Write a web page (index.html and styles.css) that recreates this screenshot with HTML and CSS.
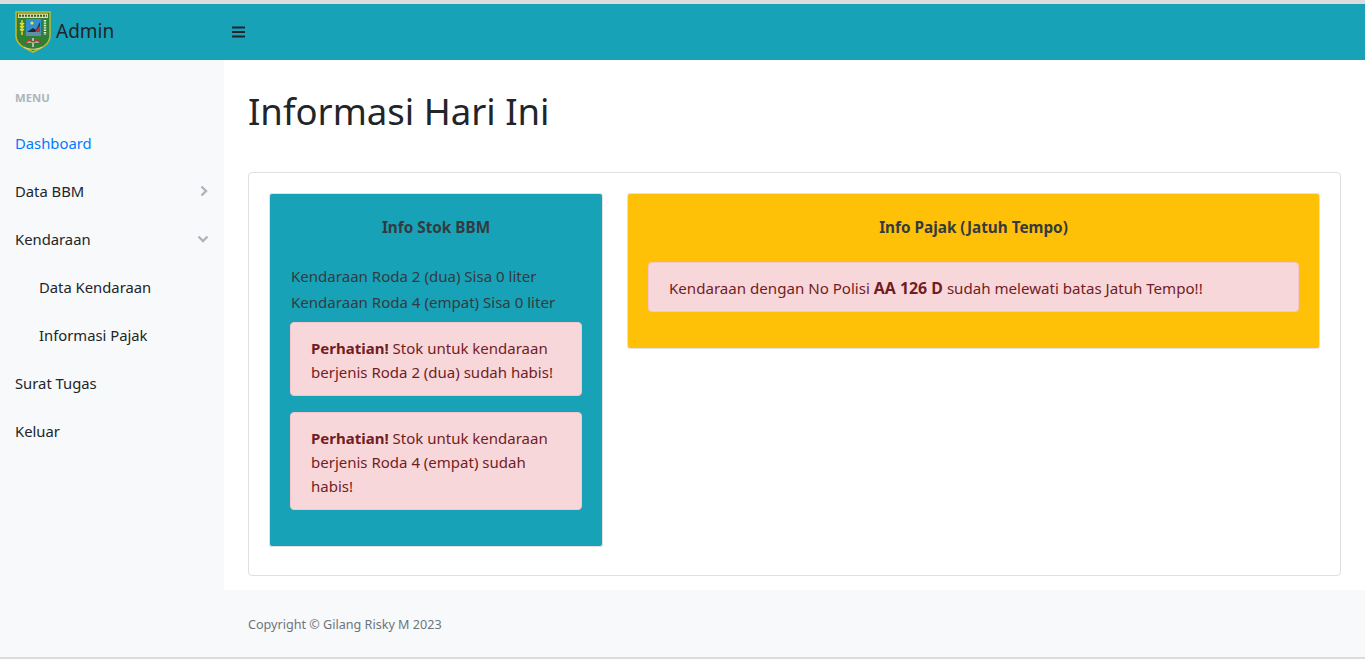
FILE: index.html
```html
<!DOCTYPE html>
<html lang="id">
<head>
    <meta charset="UTF-8">
    <meta name="viewport" content="width=device-width, initial-scale=1.0">
    <title>Informasi Hari Ini</title>
    <link rel="stylesheet" href="styles.css">
</head>
<body>
    <!-- Navbar atas -->
    <nav class="topnav">
        <a class="brand" href="#">
            <svg class="brand-logo" viewBox="0 0 36 42" aria-hidden="true">
                <path d="M1 1H35V25C35 33 27 37 18 41C9 37 1 33 1 25Z" fill="#2f7f35" stroke="#c9b92a" stroke-width="1.5"/>
                <rect x="3" y="2.5" width="30" height="4.5" fill="#dcdca0"/>
                <path d="M4 4.7H32" stroke="#3b5a3a" stroke-width="2" stroke-dasharray="2 1"/>
                <rect x="11" y="8" width="15" height="17" fill="#2f8fd0"/>
                <rect x="11" y="20" width="15" height="5" fill="#5f8fa8"/>
                <path d="M12 21L18 17L21 19L25 11V21Z" fill="#23242e"/>
                <path d="M20 21L25 14V21Z" fill="#c0303a"/>
                <circle cx="17" cy="12" r="1.6" fill="#f2e23c"/>
                <path d="M7 9V24M5 12L7 14L9 12M5 15L7 17L9 15M5 18L7 20L9 18" stroke="#e8dc38" stroke-width="1.4" fill="none"/>
                <path d="M30 9V24" stroke="#e8efe0" stroke-width="2.4" stroke-dasharray="1.4 1"/>
                <path d="M11 31H25M18 27V36" stroke="#eef2ea" stroke-width="1.2"/>
                <path d="M10 33C13 28 15 29 18 31C21 29 23 28 26 33" stroke="#c0303a" stroke-width="1.3" fill="none"/>
                <path d="M9 36C13 39 23 39 27 36" stroke="#d8d27a" stroke-width="1.2" fill="none"/>
            </svg>
            <span class="brand-name">Admin</span>
        </a>
        <button class="menu-toggle" type="button" aria-label="Menu">
            <svg viewBox="0 0 13 12" aria-hidden="true">
                <path d="M0 1.5H13M0 6H13M0 10.5H13" stroke="currentColor" stroke-width="2"/>
            </svg>
        </button>
    </nav>

    <div class="layout">
        <!-- Menu samping -->
        <aside class="sidebar">
            <div class="sidebar-heading">MENU</div>
            <a class="side-link active" href="#">Dashboard</a>
            <a class="side-link" href="#">Data BBM
                <svg class="side-arrow" viewBox="0 0 12 12" aria-hidden="true"><path d="M4.5 1.5L9 6L4.5 10.5" /></svg>
            </a>
            <a class="side-link" href="#">Kendaraan
                <svg class="side-arrow" viewBox="0 0 12 10" aria-hidden="true"><path d="M1.5 2.5L6 7L10.5 2.5" /></svg>
            </a>
            <a class="side-link sub" href="#">Data Kendaraan</a>
            <a class="side-link sub" href="#">Informasi Pajak</a>
            <a class="side-link" href="#">Surat Tugas</a>
            <a class="side-link" href="#">Keluar</a>
        </aside>

        <div class="content">
            <main class="main">
                <h1>Informasi Hari Ini</h1>
                <section class="card">
                    <div class="panel panel-info">
                        <h5>Info Stok BBM</h5>
                        <p class="stock">Kendaraan Roda 2 (dua) Sisa 0 liter</p>
                        <p class="stock">Kendaraan Roda 4 (empat) Sisa 0 liter</p>
                        <div class="alert"><strong>Perhatian!</strong> Stok untuk kendaraan berjenis Roda 2 (dua) sudah habis!</div>
                        <div class="alert"><strong>Perhatian!</strong> Stok untuk kendaraan berjenis Roda 4 (empat) sudah habis!</div>
                    </div>
                    <div class="panel panel-warning">
                        <h5>Info Pajak (Jatuh Tempo)</h5>
                        <div class="alert">Kendaraan dengan No Polisi <strong>AA 126 D</strong> sudah melewati batas Jatuh Tempo!!</div>
                    </div>
                </section>
            </main>
            <footer class="footer">Copyright &copy; Gilang Risky M 2023</footer>
        </div>
    </div>
</body>
</html>
```
FILE: styles.css
```css
* {
    box-sizing: border-box;
}

html, body {
    height: 100%;
}

body {
    margin: 0;
    display: flex;
    flex-direction: column;
    font-family: "Noto Sans", "Open Sans", sans-serif;
    font-size: 15px;
    line-height: 24px;
    color: #212529;
    background-color: #f8f9fa;
    border-top: 4px solid #dcdcdc;
    border-bottom: 2px solid #dcdcdc;
}

a {
    text-decoration: none;
    color: inherit;
}

/* Navbar atas */
.topnav {
    display: flex;
    align-items: center;
    height: 56px;
    padding-left: 15px;
    background-color: #17a2b8;
}

.brand {
    display: flex;
    align-items: center;
    width: 217px;
    font-size: 19px;
}

.brand-logo {
    width: 36px;
    height: 42px;
    margin-right: 5px;
}

.brand-name {
    padding-bottom: 2px;
}

.menu-toggle {
    display: block;
    width: 13px;
    height: 12px;
    padding: 0;
    border: none;
    background: none;
    color: #212529;
}

.menu-toggle svg {
    display: block;
    width: 13px;
    height: 12px;
}

/* Menu samping */
.layout {
    flex: 1;
    display: flex;
}

.sidebar {
    flex: 0 0 224px;
    padding-top: 16px;
    font-size: 14.8px;
}

.sidebar-heading {
    height: 43px;
    padding: 10px 15px 0;
    font-size: 11.3px;
    font-weight: 700;
    color: #adb5bd;
}

.side-link {
    display: flex;
    justify-content: space-between;
    align-items: center;
    height: 48px;
    padding: 0 15px;
}

.side-link.active {
    color: #007bff;
}

.side-link.sub {
    padding-left: 39px;
}

.side-arrow {
    width: 12px;
    height: 12px;
    fill: none;
    stroke: #adb5bd;
    stroke-width: 2.4;
}

/* Conteudo */
.content {
    flex: 1;
    display: flex;
    flex-direction: column;
}

.main {
    flex: 1;
    padding: 27px 24px 14px;
    background-color: #fff;
}

h1 {
    margin: 0 0 37px;
    font-size: 36.5px;
    line-height: 48px;
    font-weight: 400;
}

.card {
    display: grid;
    grid-template-columns: 334px 1fr;
    gap: 24px;
    align-items: start;
    height: 404px;
    padding: 20px 20px 0;
    background-color: #fff;
    border: 1px solid #dfdfdf;
    border-radius: 4px;
}

.panel {
    padding: 21px 20px 20px;
    border: 1px solid #e3e3e3;
    border-radius: 3px;
}

.panel-info {
    background-color: #17a2b8;
}

.panel-warning {
    background-color: #ffc107;
}

h5 {
    margin: 0 0 24px;
    font-size: 15.3px;
    line-height: 24px;
    font-weight: 700;
    text-align: center;
    color: #343a40;
}

.panel-warning h5 {
    margin-bottom: 23px;
}

.stock {
    margin: 0;
    padding-left: 1px;
    font-size: 15.05px;
    line-height: 26px;
    color: #343a40;
}

.stock + .alert {
    margin-top: 7px;
}

.alert {
    margin-bottom: 16px;
    padding: 13px 20px 11px;
    background-color: #f8d7da;
    color: #721c24;
    border: 1px solid #f5c6cb;
    border-radius: 4px;
}

.panel-warning .alert {
    font-size: 15.1px;
}

.panel-warning .alert strong {
    font-size: 15.9px;
}

.footer {
    flex: 0 0 67px;
    display: flex;
    align-items: center;
    padding: 2px 0 0 24px;
    font-size: 12.6px;
    color: #6c757d;
}
```
